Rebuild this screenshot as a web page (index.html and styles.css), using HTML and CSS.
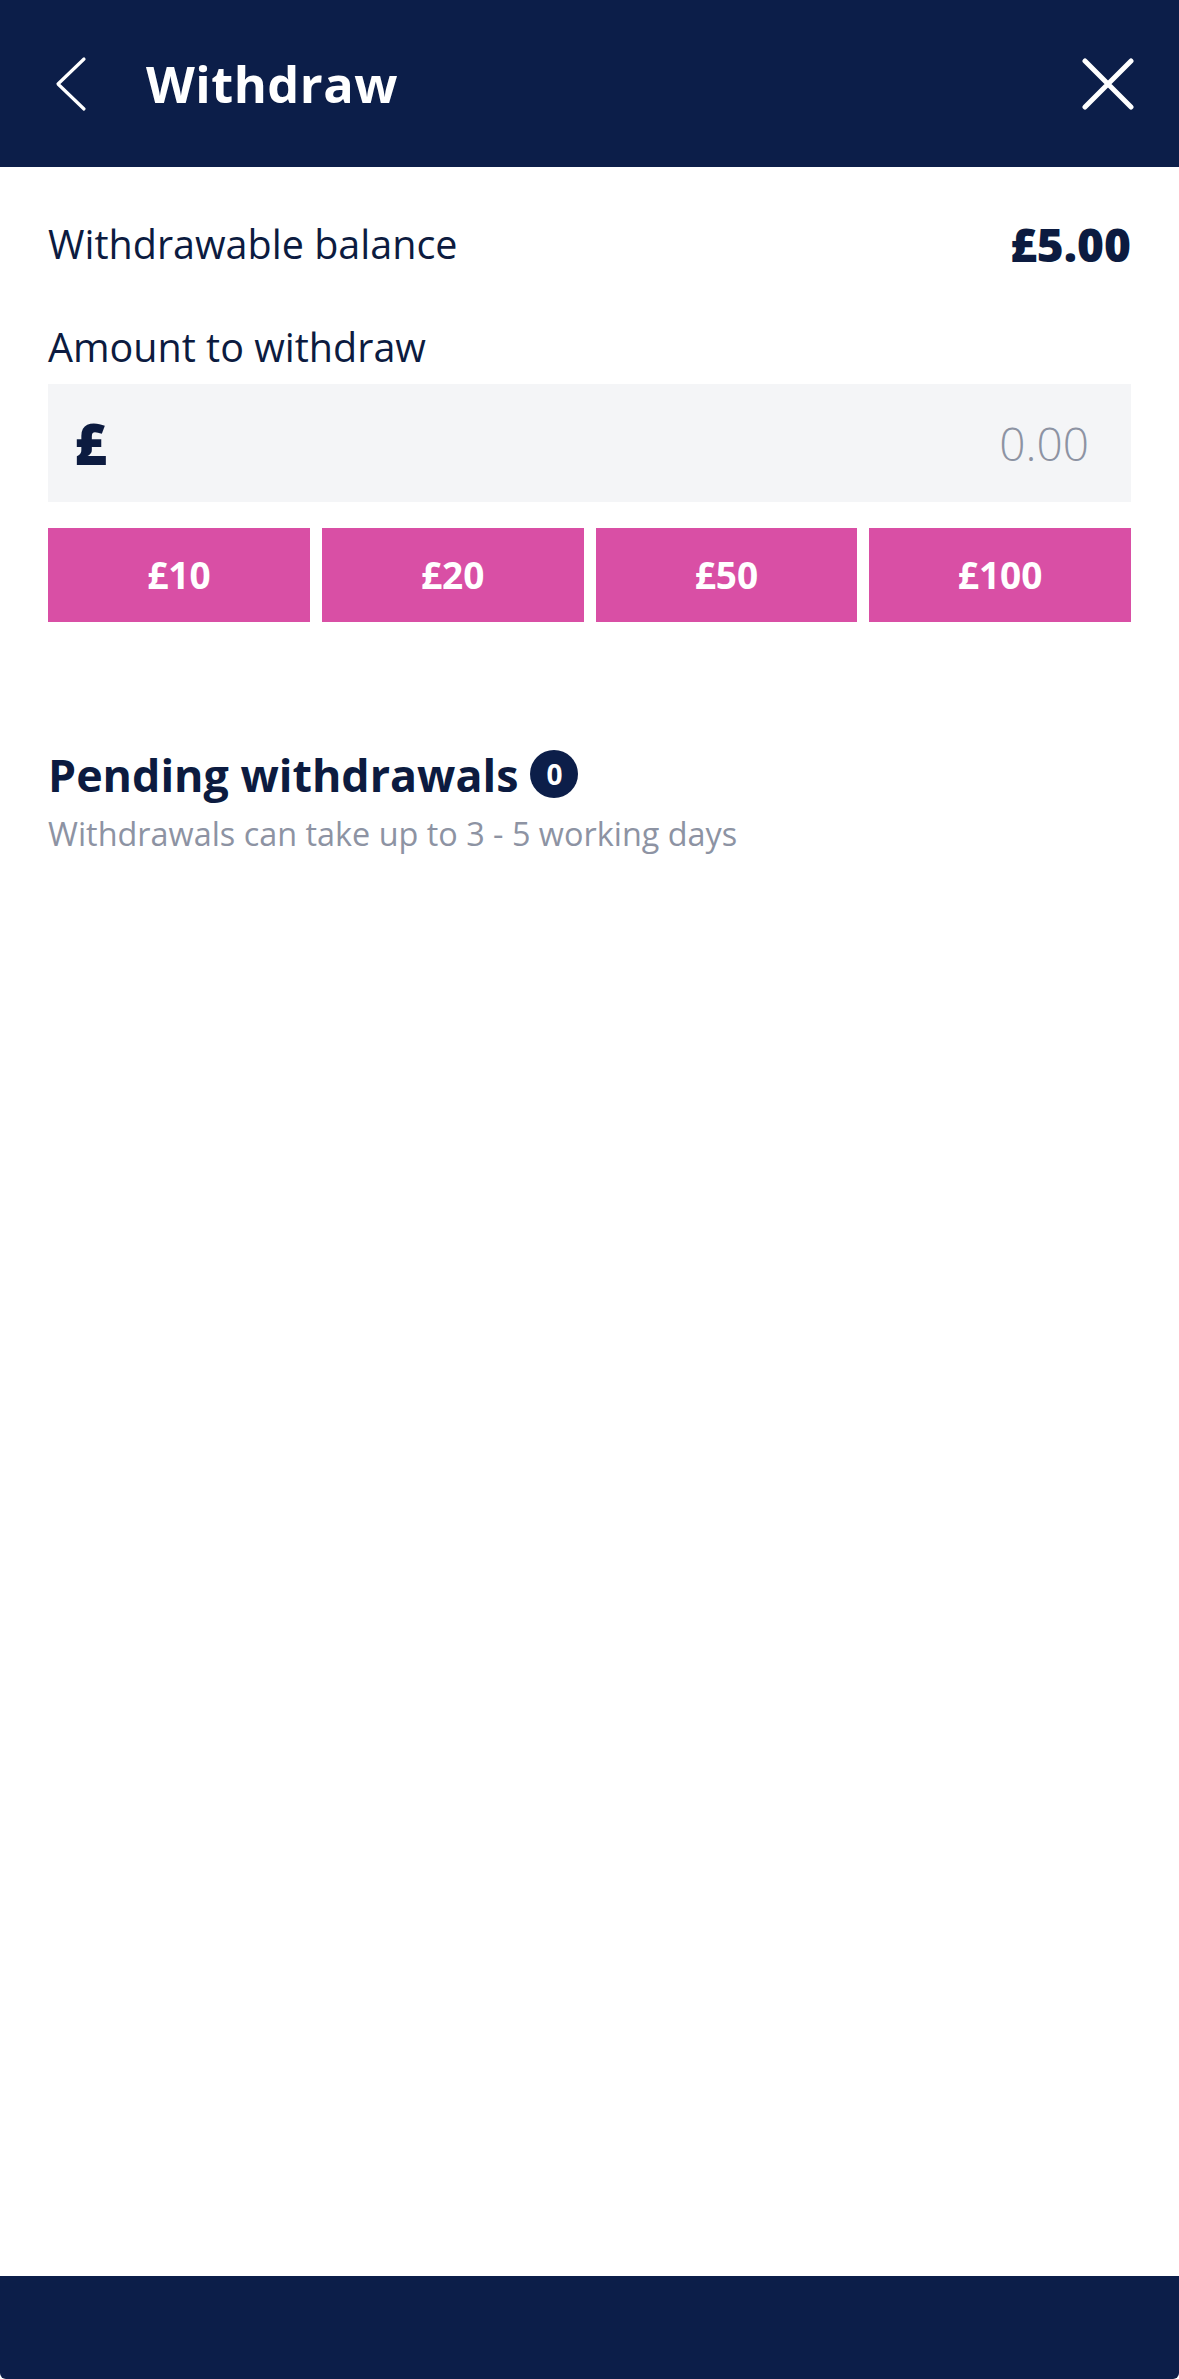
FILE: index.html
```html
<!DOCTYPE html>
<html lang="en">
<head>
    <meta charset="UTF-8">
    <title>Withdraw</title>
    <link rel="stylesheet" href="styles.css">
</head>
<body>

    <div id="app">
        <!--顶部栏-->
        <div class="top">
            <a class="back" href="#">
                <svg width="34" height="56" viewBox="0 0 34 56">
                    <polyline points="30,3 4,28 30,53" fill="none" stroke="#fff" stroke-width="3.2" stroke-linecap="round" stroke-linejoin="round"/>
                </svg>
            </a>
            <h1>Withdraw</h1>
            <a class="close" href="#">
                <svg width="52" height="52" viewBox="0 0 52 52">
                    <path d="M3 3 L49 49 M49 3 L3 49" fill="none" stroke="#fff" stroke-width="5" stroke-linecap="round"/>
                </svg>
            </a>
        </div>

        <!--内容-->
        <div class="main">
            <div class="balance">
                <p>Withdrawable balance</p>
                <strong>£5.00</strong>
            </div>

            <p class="label">Amount to withdraw</p>
            <div class="amount">
                <span class="cur">£</span>
                <input type="text" placeholder="0.00">
            </div>

            <ul class="quick">
                <li>£10</li>
                <li>£20</li>
                <li>£50</li>
                <li>£100</li>
            </ul>

            <h2 class="pending">Pending withdrawals <span class="num">0</span></h2>
            <p class="note">Withdrawals can take up to 3 - 5 working days</p>
        </div>

        <!--底部栏-->
        <div class="bottom"></div>
    </div>

</body>
</html>
```

FILE: styles.css
```css
body{margin:0;font-family:"Open Sans","DejaVu Sans",sans-serif;color:#0c1b40;background:#fff;}
p,h1,h2{margin:0;}
ul,li{margin:0;padding:0;list-style:none;}

#app{
    display: flex;
    flex-direction: column;
    width: 1179px;
    height: 2379px;
}

/* 顶部栏 */
.top{
    display: flex;
    align-items: center;
    height: 167px;
    padding: 0 45px 0 54px;
    background-color: #0c1e49;
    flex-shrink: 0;
}
.top .back{
    display: flex;
    width: 34px;
}
.top h1{
    flex: 1;
    margin-left: 58px;
    font-size: 50.5px;
    font-weight: 700;
    color: #fff;
    letter-spacing: .5px;
}
.top .close{
    display: flex;
}

/* 内容 */
.main{
    flex: 1;
    padding: 0 48px;
}
.balance{
    display: flex;
    justify-content: space-between;
    align-items: center;
    margin-top: 47px;
    height: 60px;
}
.balance p{
    font-size: 39.5px;
}
.balance strong{
    font-size: 46px;
    font-weight: 800;
}
.label{
    margin-top: 48px;
    height: 50px;
    line-height: 50px;
    font-size: 39.5px;
}
.amount{
    display: flex;
    align-items: center;
    height: 118px;
    margin-top: 12px;
    padding: 0 40px 0 26px;
    background-color: #f4f5f7;
}
.amount .cur{
    font-size: 56px;
    font-weight: 800;
}
.amount input{
    flex: 1;
    min-width: 0;
    border: none;
    outline: none;
    background: none;
    text-align: right;
    font-family: inherit;
    font-size: 46px;
    font-weight: 300;
    color: #0c1b40;
}
.amount input::placeholder{
    color: #8d93a3;
}
.quick{
    display: grid;
    grid-template-columns: repeat(4,1fr);
    gap: 12px;
    margin-top: 26px;
}
.quick li{
    height: 94px;
    line-height: 94px;
    text-align: center;
    background-color: #d94fa5;
    color: #fff;
    font-size: 37px;
    font-weight: 700;
}
.pending{
    display: flex;
    align-items: center;
    gap: 12px;
    margin-top: 122px;
    height: 60px;
    font-size: 44.8px;
    font-weight: 700;
}
.pending .num{
    width: 48px;
    height: 48px;
    border-radius: 50%;
    background-color: #0c1e49;
    color: #fff;
    font-size: 28px;
    line-height: 48px;
    text-align: center;
}
.note{
    margin-top: 4px;
    height: 50px;
    line-height: 50px;
    font-size: 32.4px;
    color: #8d93a3;
}

/* 底部栏 */
.bottom{
    height: 103px;
    flex-shrink: 0;
    background-color: #0c1e49;
    border-radius: 0 0 6px 6px;
}
```
